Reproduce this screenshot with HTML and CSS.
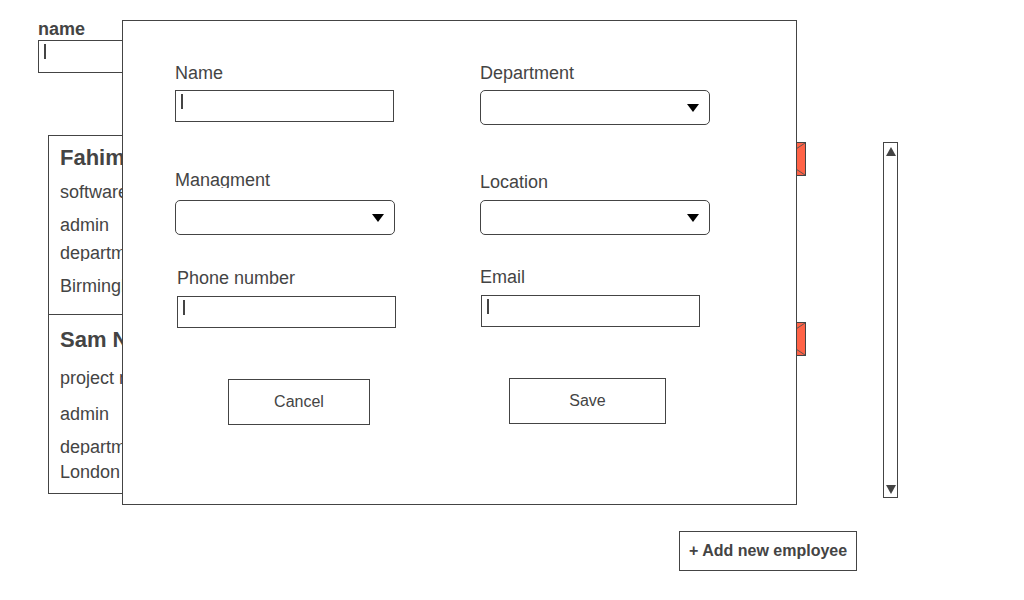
FILE: index.html
```html
<!DOCTYPE html>
<html lang="en">
<head>
    <meta charset="UTF-8">
    <meta name="viewport" content="width=device-width, initial-scale=1.0">
    <title>Employees</title>
    <link rel="stylesheet" href="styles.css">
</head>
<body>
    <!-- Search -->
    <div class="search">
        <div class="search-label">name</div>
        <div class="search-input"><span class="caret"></span></div>
    </div>

    <!-- Employee list -->
    <div class="list-row">
        <div class="cards">
            <div class="card">
                <div class="card-title">Fahim Ahmed</div>
                <div class="card-line first">software engineer</div>
                <div class="card-line">admin</div>
                <div class="card-line clip tight">department</div>
                <div class="card-line last">Birmingham</div>
                <button class="delete-btn">
                    <svg viewBox="0 0 50 34" preserveAspectRatio="none"><line x1="0" y1="0" x2="50" y2="34"/><line x1="0" y1="34" x2="50" y2="0"/></svg>
                </button>
            </div>
            <div class="card">
                <div class="card-title">Sam Noor</div>
                <div class="card-line first">project manager</div>
                <div class="card-line">admin</div>
                <div class="card-line clip">department</div>
                <div class="card-line tight">London</div>
                <button class="delete-btn">
                    <svg viewBox="0 0 50 34" preserveAspectRatio="none"><line x1="0" y1="0" x2="50" y2="34"/><line x1="0" y1="34" x2="50" y2="0"/></svg>
                </button>
            </div>
        </div>
        <div class="scrollbar">
            <span class="arrow-up"></span>
            <span class="arrow-down"></span>
        </div>
    </div>

    <div class="actions">
        <button class="add-btn">+ Add new employee</button>
    </div>

    <!-- Modal -->
    <div class="modal">
        <div class="form-row">
            <div class="field">
                <div class="field-label">Name</div>
                <div class="text-input"><span class="caret"></span></div>
            </div>
            <div class="field">
                <div class="field-label">Department</div>
                <div class="select-box"><span class="select-arrow"></span></div>
            </div>
        </div>
        <div class="form-row row-2">
            <div class="field">
                <div class="field-label clip">Managment</div>
                <div class="select-box narrow"><span class="select-arrow"></span></div>
            </div>
            <div class="field shift-down">
                <div class="field-label">Location</div>
                <div class="select-box"><span class="select-arrow"></span></div>
            </div>
        </div>
        <div class="form-row row-3">
            <div class="field phone">
                <div class="field-label">Phone number</div>
                <div class="text-input"><span class="caret"></span></div>
            </div>
            <div class="field email">
                <div class="field-label">Email</div>
                <div class="text-input"><span class="caret"></span></div>
            </div>
        </div>
        <div class="form-row buttons">
            <div class="field">
                <button class="modal-btn cancel">Cancel</button>
            </div>
            <div class="field">
                <button class="modal-btn save">Save</button>
            </div>
        </div>
    </div>
</body>
</html>
```

FILE: styles.css
```css
body {
    margin: 0;
    padding: 19px 0 0 38px;
    font-family: "Liberation Sans", Arial, sans-serif;
    color: #444;
    background-color: #fff;
}

button {
    font-family: inherit;
    color: #444;
    background-color: #fff;
    border: 1px solid #444;
    padding: 0;
    cursor: pointer;
}

.caret {
    display: block;
    width: 1.5px;
    height: 15px;
    margin: 3px 0 0 5px;
    background-color: #444;
}

/* Search */
.search-label {
    font-size: 18px;
    font-weight: bold;
    line-height: 21px;
}

.search-input {
    width: 160px;
    height: 33px;
    box-sizing: border-box;
    border: 1px solid #444;
}

/* List */
.list-row {
    display: flex;
    align-items: flex-start;
    margin: 62px 0 0 10px;
}

.cards {
    width: 749px;
}

.card {
    position: relative;
    height: 180px;
    box-sizing: border-box;
    border: 1px solid #444;
    padding: 9px 0 0 11px;
}

.card + .card {
    margin-top: -1px;
    padding-top: 12px;
}

.card-title {
    font-size: 22px;
    font-weight: bold;
    line-height: 26px;
}

.card-line {
    font-size: 18px;
    line-height: 21px;
    margin-top: 12px;
}

.card-line.first {
    margin-top: 11px;
}

.card + .card .card-line {
    margin-top: 15px;
}

.card-line.clip {
    height: 18px;
    overflow: hidden;
}

.card .card-line.tight {
    margin-top: 7px;
}

.card + .card .card-line.clip {
    margin-top: 12px;
}

.card-line.last {
    margin-top: 15px;
}

.delete-btn {
    position: absolute;
    top: 6px;
    right: -10px;
    width: 50px;
    height: 34px;
    background-color: #ff6347;
    box-sizing: border-box;
}

.card + .card .delete-btn {
    top: 7px;
}

.delete-btn svg {
    display: block;
    width: 100%;
    height: 100%;
}

.delete-btn line {
    stroke: #555;
    stroke-width: 1;
}

.scrollbar {
    width: 15px;
    height: 356px;
    box-sizing: border-box;
    border: 1px solid #444;
    margin: 7px 0 0 86px;
    display: flex;
    flex-direction: column;
    justify-content: space-between;
    align-items: center;
    padding: 4px 0 3px;
}

.arrow-up {
    border-left: 5px solid transparent;
    border-right: 5px solid transparent;
    border-bottom: 9px solid #444;
}

.arrow-down {
    border-left: 5px solid transparent;
    border-right: 5px solid transparent;
    border-top: 9px solid #444;
}

.actions {
    margin: 33px 0 0 641px;
}

.add-btn {
    height: 40px;
    padding: 0 9px;
    font-size: 16px;
    font-weight: bold;
}

/* Modal */
.modal {
    position: absolute;
    left: 122px;
    top: 20px;
    width: 675px;
    height: 485px;
    box-sizing: border-box;
    border: 1px solid #444;
    background-color: #fff;
    padding: 42px 0 0 52px;
}

.form-row {
    display: flex;
    align-items: flex-start;
}

.field:first-child {
    width: 305px;
}

.field-label {
    font-size: 18px;
    line-height: 21px;
    margin-bottom: 6px;
}

.field-label.clip {
    height: 18px;
    overflow: hidden;
    margin-bottom: 12px;
}

.text-input {
    width: 219px;
    height: 32px;
    box-sizing: border-box;
    border: 1px solid #444;
}

.select-box {
    width: 230px;
    height: 35px;
    box-sizing: border-box;
    border: 1px solid #444;
    border-radius: 5px;
    display: flex;
    align-items: center;
    justify-content: flex-end;
    padding-right: 10px;
}

.select-box.narrow {
    width: 220px;
}

.select-arrow {
    border-left: 6px solid transparent;
    border-right: 6px solid transparent;
    border-top: 8px solid #000;
}

.row-2 {
    margin-top: 45px;
}

.shift-down {
    margin-top: 2px;
}

.shift-down .field-label {
    margin-bottom: 7px;
}

.row-3 {
    margin-top: 32px;
}

.row-3 .field-label {
    margin-bottom: 7px;
}

.field.phone {
    width: 303px;
    margin: 1px 0 0 2px;
}

.field.email .text-input {
    margin-left: 1px;
}

.buttons {
    margin-top: 50px;
}

.modal-btn {
    height: 46px;
    font-size: 16px;
}

.modal-btn.cancel {
    width: 142px;
    margin: 1px 0 0 53px;
}

.modal-btn.save {
    width: 157px;
    margin-left: 29px;
}
```
